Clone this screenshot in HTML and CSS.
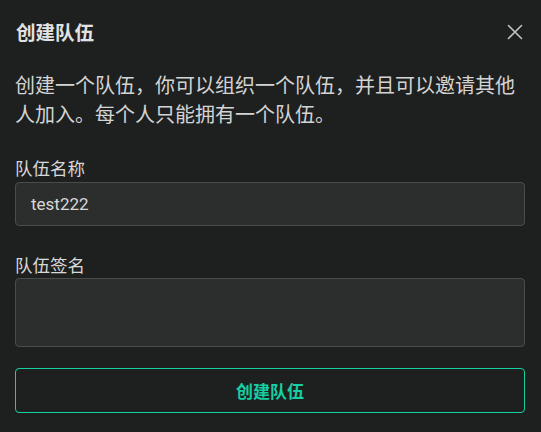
FILE: index.html
```html
<!DOCTYPE html>
<html lang="zh-CN">
<head>
<meta charset="utf-8">
<title>创建队伍</title>
<link rel="stylesheet" href="styles.css">
</head>
<body>
<div class="dialog">
  <div class="header">
    <div class="title">创建队伍</div>
    <button class="close" aria-label="关闭">
      <svg width="16" height="16" viewBox="0 0 16 16"><path d="M1.5 1.5 L14.5 14.5 M14.5 1.5 L1.5 14.5" stroke="#bfc0c0" stroke-width="1.6" fill="none" stroke-linecap="round"/></svg>
    </button>
  </div>
  <p class="desc">创建一个队伍，你可以组织一个队伍，并且可以邀请其他人加入。每个人只能拥有一个队伍。</p>
  <label class="label first">队伍名称</label>
  <div class="input">test222</div>
  <label class="label second">队伍签名</label>
  <div class="textarea"></div>
  <button class="submit">创建队伍</button>
</div>
</body>
</html>
```
FILE: styles.css
```css
html, body {
  margin: 0;
  padding: 0;
  background: #1e2020;
}
body {
  font-family: "Noto Sans CJK SC", "Noto Sans", sans-serif;
  color: #d6d6d6;
}
.dialog {
  padding: 18px 16px 0 15px;
  display: flex;
  flex-direction: column;
}
.header {
  height: 28px;
  display: flex;
  align-items: center;
  justify-content: space-between;
}
.title {
  font-size: 19.5px;
  font-weight: 700;
  color: #e2e2e2;
  line-height: 28px;
  padding-left: 1px;
}
.close {
  background: none;
  border: none;
  padding: 0;
  width: 16px;
  height: 16px;
  display: flex;
  margin-right: 2px;
}
.desc {
  margin: 24px 0 0 0;
  font-size: 20px;
  line-height: 29px;
  color: #d4d4d4;
}
.label {
  display: block;
  font-size: 17.5px;
  line-height: 24px;
  color: #d8d8d8;
}
.label.first { margin-top: 28px; }
.label.second { margin-top: 27px; }
.input {
  margin-top: 2px;
  height: 42px;
  border: 1px solid #4a4b4b;
  border-radius: 4px;
  background: #2c2d2d;
  box-sizing: content-box;
  padding: 0 15px;
  display: flex;
  align-items: center;
  font-family: Roboto, "Noto Sans", sans-serif;
  font-size: 17px;
  color: #d8d8d8;
}
.textarea {
  margin-top: 1px;
  height: 67px;
  border: 1px solid #4a4b4b;
  border-radius: 4px;
  background: #2c2d2d;
}
.submit {
  margin-top: 21px;
  height: 45px;
  border: 1px solid #16cfa2;
  border-radius: 4px;
  background: transparent;
  color: #16cfa2;
  font-family: "Noto Sans CJK SC", sans-serif;
  font-size: 17px;
  font-weight: 700;
  padding: 0;
}
```
